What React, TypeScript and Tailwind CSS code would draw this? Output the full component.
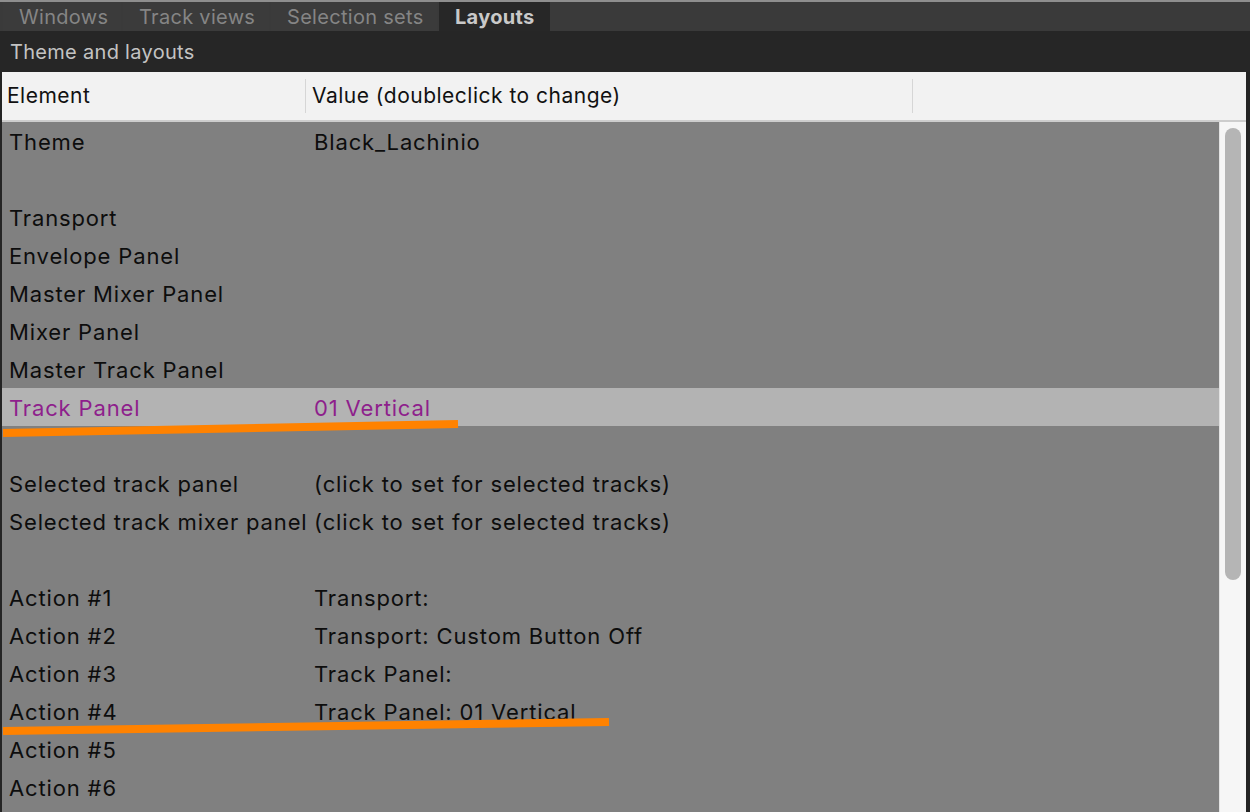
import React from "react";

type Row = { el?: string; value?: string; selected?: boolean };

const rows: Row[] = [
  { el: "Theme", value: "Black_Lachinio" },
  {},
  { el: "Transport" },
  { el: "Envelope Panel" },
  { el: "Master Mixer Panel" },
  { el: "Mixer Panel" },
  { el: "Master Track Panel" },
  { el: "Track Panel", value: "01 Vertical", selected: true },
  {},
  { el: "Selected track panel", value: "(click to set for selected tracks)" },
  { el: "Selected track mixer panel", value: "(click to set for selected tracks)" },
  {},
  { el: "Action #1", value: "Transport:" },
  { el: "Action #2", value: "Transport: Custom Button Off" },
  { el: "Action #3", value: "Track Panel:" },
  { el: "Action #4", value: "Track Panel: 01 Vertical" },
  { el: "Action #5" },
  { el: "Action #6" },
];

const tabs = [
  { label: "Windows", w: "w-[118px]" },
  { label: "Track views", w: "w-[146px]" },
  { label: "Selection sets", w: "w-[166px]" },
  { label: "Layouts", w: "w-[111px]", active: true },
];

export default function App() {
  return (
    <div
      className="relative w-[1250px] h-[812px] overflow-hidden bg-[#242424] flex flex-col"
      style={{ fontFamily: "Inter, 'Liberation Sans', sans-serif" }}
    >
      {/* Tab strip */}
      <div className="h-[31px] shrink-0 bg-[#3a3a3a] border-t-2 border-[#8e8e8e] flex pl-[3px] gap-[2px]">
        {tabs.map((t) => (
          <div
            key={t.label}
            className={`${t.w} flex items-center pl-[16px] text-[20px] tracking-[0.3px] ${
              t.active ? "bg-[#272727] text-[#c9c9c9] font-bold" : "bg-[#3b3b3b] text-[#858585]"
            }`}
          >
            {t.label}
          </div>
        ))}
      </div>

      {/* Section title */}
      <div className="h-[41px] shrink-0 bg-[#262626] flex items-center pl-[10px] text-[20px] tracking-[0.3px] text-[#c3c3c3]">
        Theme and layouts
      </div>

      {/* List */}
      <div className="flex-1 flex flex-col pl-[2px] pr-[4px] min-h-0">
        <div className="h-[50px] shrink-0 bg-[#f2f2f2] border-b-2 border-[#cdcdcd] flex items-center text-[21px] tracking-[0.5px] text-[#111]">
          <div className="w-[304px] pl-[5px] h-[34px] flex items-center border-r border-[#d6d6d6]">Element</div>
          <div className="w-[607px] pl-[6px] h-[34px] flex items-center border-r border-[#d6d6d6]">
            Value (doubleclick to change)
          </div>
        </div>

        <div className="flex-1 flex min-h-0">
          <div className="flex-1 bg-[#808080] overflow-hidden">
            {rows.map((r, i) => (
              <div
                key={i}
                className={`h-[38px] pt-[3px] flex items-center text-[22px] tracking-[0.85px] ${
                  r.selected ? "bg-[#b3b3b3] text-[#8e1f8c]" : "text-[#0d0d0d]"
                }`}
              >
                <div className="w-[305px] pl-[7px] whitespace-nowrap overflow-hidden">{r.el}</div>
                <div className="pl-[7px] whitespace-nowrap">{r.value}</div>
              </div>
            ))}
          </div>
          <div className="w-[27px] bg-[#f6f6f6] border-l border-[#e2e2e2] pt-[6px] flex justify-center">
            <div className="w-[16px] h-[452px] rounded-full bg-[#b5b5b5]" />
          </div>
        </div>
      </div>

      {/* Orange annotation strokes */}
      <svg className="absolute left-0 top-0 pointer-events-none" width="1250" height="812">
        <line x1="3" y1="433" x2="458" y2="424" stroke="#ff8200" strokeWidth="8" />
        <line x1="3" y1="731" x2="609" y2="722" stroke="#ff8200" strokeWidth="8" />
      </svg>
    </div>
  );
}
